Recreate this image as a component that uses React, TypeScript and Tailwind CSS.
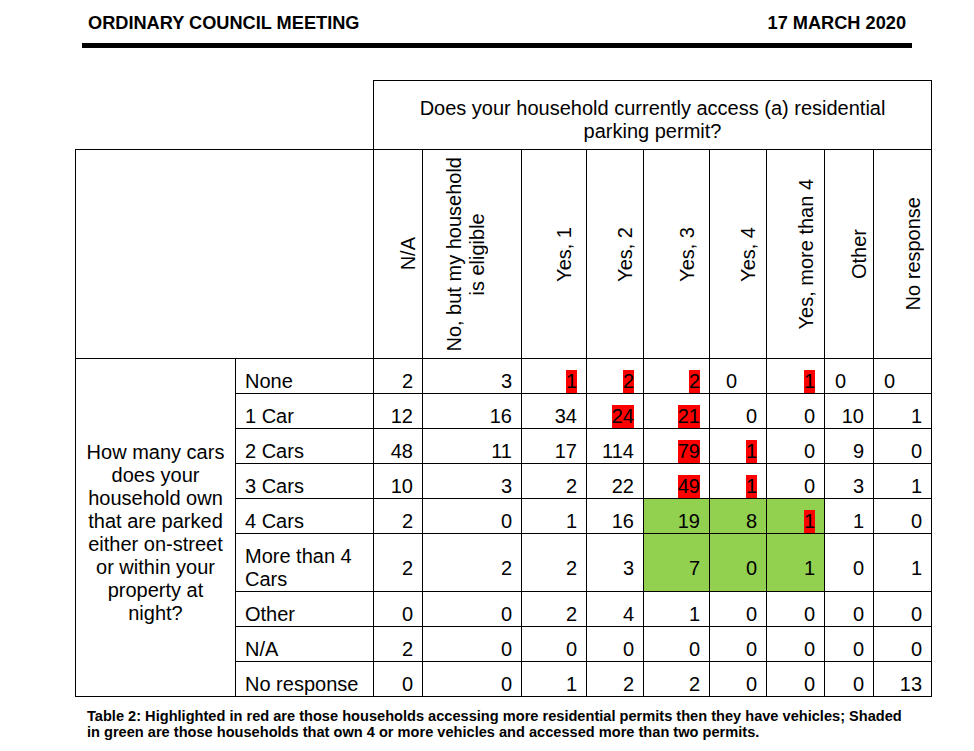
import React from "react";

type Cell = { v: string; red?: boolean; green?: boolean; left?: "a" | "b" };

const columns: string[][] = [
  ["N/A"],
  ["No, but my household", "is eligible"],
  ["Yes, 1"],
  ["Yes, 2"],
  ["Yes, 3"],
  ["Yes, 4"],
  ["Yes, more than 4"],
  ["Other"],
  ["No response"],
];

const rows: { label: string[]; cells: Cell[] }[] = [
  {
    label: ["None"],
    cells: [
      { v: "2" },
      { v: "3" },
      { v: "1", red: true },
      { v: "2", red: true },
      { v: "2", red: true },
      { v: "0", left: "b" },
      { v: "1", red: true },
      { v: "0", left: "a" },
      { v: "0", left: "a" },
    ],
  },
  {
    label: ["1 Car"],
    cells: [
      { v: "12" },
      { v: "16" },
      { v: "34" },
      { v: "24", red: true },
      { v: "21", red: true },
      { v: "0" },
      { v: "0" },
      { v: "10" },
      { v: "1" },
    ],
  },
  {
    label: ["2 Cars"],
    cells: [
      { v: "48" },
      { v: "11" },
      { v: "17" },
      { v: "114" },
      { v: "79", red: true },
      { v: "1", red: true },
      { v: "0" },
      { v: "9" },
      { v: "0" },
    ],
  },
  {
    label: ["3 Cars"],
    cells: [
      { v: "10" },
      { v: "3" },
      { v: "2" },
      { v: "22" },
      { v: "49", red: true },
      { v: "1", red: true },
      { v: "0" },
      { v: "3" },
      { v: "1" },
    ],
  },
  {
    label: ["4 Cars"],
    cells: [
      { v: "2" },
      { v: "0" },
      { v: "1" },
      { v: "16" },
      { v: "19", green: true },
      { v: "8", green: true },
      { v: "1", green: true, red: true },
      { v: "1" },
      { v: "0" },
    ],
  },
  {
    label: ["More than 4", "Cars"],
    cells: [
      { v: "2" },
      { v: "2" },
      { v: "2" },
      { v: "3" },
      { v: "7", green: true },
      { v: "0", green: true },
      { v: "1", green: true },
      { v: "0" },
      { v: "1" },
    ],
  },
  {
    label: ["Other"],
    cells: ["0", "0", "2", "4", "1", "0", "0", "0", "0"].map((v) => ({ v })),
  },
  {
    label: ["N/A"],
    cells: ["2", "0", "0", "0", "0", "0", "0", "0", "0"].map((v) => ({ v })),
  },
  {
    label: ["No response"],
    cells: ["0", "0", "1", "2", "2", "0", "0", "0", "13"].map((v) => ({ v })),
  },
];

const question = [
  "How many cars",
  "does your",
  "household own",
  "that are parked",
  "either on-street",
  "or within your",
  "property at",
  "night?",
];

function ValueCell({ cell }: { cell: Cell }) {
  const align =
    cell.left === "a"
      ? "text-left pl-[10px]"
      : cell.left === "b"
      ? "text-left pl-[16px]"
      : "text-right pr-[9px]";
  const bg = cell.green ? "bg-[#92d050]" : "";
  return (
    <td className={`border border-black pt-[11px] pb-0 align-middle leading-[23px] ${align} ${bg}`}>
      {cell.red ? <span className="inline-block h-[23px] bg-[#ff0000]">{cell.v}</span> : cell.v}
    </td>
  );
}

export default function App() {
  return (
    <div className="min-h-[751px] w-[974px] bg-white font-['Liberation_Sans',Arial,sans-serif] text-black">
      {/* page header */}
      <div className="ml-[82px] w-[830px] pt-[13px]">
        <div className="flex justify-between px-[6px] text-[18.2px] font-bold leading-[20px]">
          <span>ORDINARY COUNCIL MEETING</span>
          <span>17 MARCH 2020</span>
        </div>
        <div className="mt-[10px] h-[5px] bg-black" />
      </div>

      <table className="ml-[75px] mt-[32px] w-[856px] table-fixed border-collapse text-[20px]">
        <colgroup>
          <col className="w-[160px]" />
          <col className="w-[138px]" />
          <col className="w-[49px]" />
          <col className="w-[99px]" />
          <col className="w-[65px]" />
          <col className="w-[57px]" />
          <col className="w-[66px]" />
          <col className="w-[57px]" />
          <col className="w-[58px]" />
          <col className="w-[49px]" />
          <col className="w-[58px]" />
        </colgroup>
        <tbody>
          <tr>
            <td colSpan={2} className="p-0" />
            <td colSpan={9} className="border border-black pt-[16px] pb-[6px] text-center leading-[23px]">
              Does your household currently access (a) residential
              <br />
              parking permit?
            </td>
          </tr>
          <tr>
            <td colSpan={2} className="border border-black p-0" />
            {columns.map((lines, i) => (
              <td key={i} className="border border-black p-0 align-middle">
                <div
                  className={`flex h-[208px] items-center justify-center ${
                    i === 1 ? "pr-[13px]" : "pl-[21px]"
                  }`}
                >
                  <div className="rotate-180 whitespace-nowrap text-center leading-[23px] [writing-mode:vertical-rl]">
                    {lines.map((l, j) => (
                      <React.Fragment key={j}>
                        {j > 0 && <br />}
                        {l}
                      </React.Fragment>
                    ))}
                  </div>
                </div>
              </td>
            ))}
          </tr>
          {rows.map((row, r) => (
            <tr key={r}>
              {r === 0 && (
                <td
                  rowSpan={rows.length}
                  className="border border-black pt-[11px] pb-0 text-center align-middle leading-[23px]"
                >
                  {question.map((l, j) => (
                    <React.Fragment key={j}>
                      {j > 0 && <br />}
                      {l}
                    </React.Fragment>
                  ))}
                </td>
              )}
              <td className="border border-black pt-[11px] pb-0 pl-[9px] text-left align-middle leading-[23px]">
                {row.label.map((l, j) => (
                  <React.Fragment key={j}>
                    {j > 0 && <br />}
                    {l}
                  </React.Fragment>
                ))}
              </td>
              {row.cells.map((c, i) => (
                <ValueCell key={i} cell={c} />
              ))}
            </tr>
          ))}
        </tbody>
      </table>

      <p className="ml-[87px] mt-[11px] text-[14.6px] font-bold leading-[16px]">
        Table 2: Highlighted in red are those households accessing more residential permits then they have vehicles; Shaded
        <br />
        in green are those households that own 4 or more vehicles and accessed more than two permits.
      </p>
    </div>
  );
}
